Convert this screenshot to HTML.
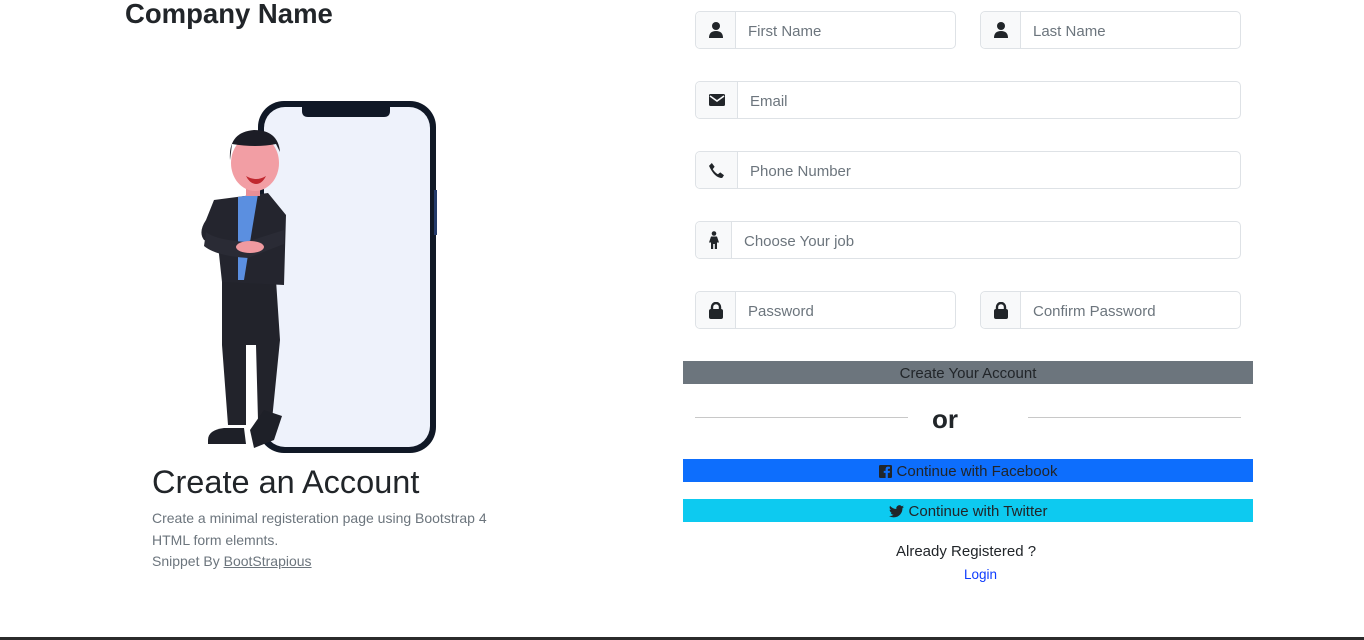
<!DOCTYPE html>
<html><head><meta charset="utf-8"><style>
*{box-sizing:border-box;margin:0;padding:0}
body{width:1364px;height:640px;background:#fff;font-family:"Liberation Sans",sans-serif;color:#212529;position:relative;overflow:hidden}
.abs{position:absolute}
.ig{position:absolute;height:38px;border:1px solid #dee2e6;border-radius:5px;display:flex;background:#fff}
.ig .ad{background:#f8f9fa;border-right:1px solid #dee2e6;display:flex;align-items:center;justify-content:center;border-radius:5px 0 0 5px}
.ig .ph{padding-left:12px;padding-top:2px;display:flex;align-items:center;font-size:15px;color:#6c757d}
.btn{position:absolute;left:683px;width:570px;height:23px;padding-top:2px;display:flex;align-items:center;justify-content:center;font-size:15px;color:#212529;gap:5px}
</style></head><body>
<div class="abs" style="left:125px;top:-2px;font-size:27.5px;font-weight:bold;color:#212529">Company Name</div>

<svg class="abs" style="left:190px;top:95px" width="260" height="365" viewBox="190 95 260 365">
<rect x="258" y="101" width="178" height="352" rx="26" fill="#101826"/>
<rect x="264" y="107" width="166" height="340" rx="21" fill="#eef2fb"/>
<path d="M302 107 h88 v4 q0 6 -6 6 h-76 q-6 0 -6 -6z" fill="#101826"/>
<rect x="434" y="190" width="3" height="45" fill="#233a6a"/>
<path d="M222 280 L276 280 L280 340 L272 420 L258 420 L256 345 L246 345 L246 425 L228 425 L222 345z" fill="#22232b"/>
<path d="M208 440 q0 -10 16 -12 l20 0 l2 16 l-38 0z" fill="#1e2028"/>
<path d="M250 430 l14 -20 l18 6 l-8 24 l-20 8z" fill="#1e2028"/>
<path d="M214 200 L268 193 L286 215 L284 285 L222 282 L218 245 L204 240 q-6 -8 2 -20z" fill="#24252e"/>
<path d="M238 197 L258 194 L252 230 L244 280 L238 280z" fill="#5b8fe0"/>
<path d="M206 232 q10 8 40 10 l38 -12 l0 14 l-36 14 q-32 -2 -44 -12z" fill="#2a2b35"/>
<ellipse cx="250" cy="247" rx="14" ry="6" fill="#f09aa0"/>
<rect x="246" y="180" width="14" height="16" fill="#e88f96"/>
<ellipse cx="255" cy="163" rx="24" ry="28" fill="#f29ea4"/>
<path d="M230 160 q-2 -28 24 -30 q24 0 26 22 l-4 -8 q-20 4 -44 0z" fill="#1c1d26"/>
<path d="M246 176 q10 6 20 0 q-4 8 -10 8 q-6 0 -10 -8z" fill="#c0282f"/>
</svg>

<div class="abs" style="left:152px;top:464px;font-size:32.5px;font-weight:500;color:#212529">Create an Account</div>
<div class="abs" style="left:152px;top:508px;font-size:14px;line-height:21.5px;color:#6c757d">Create a minimal registeration page using Bootstrap 4<br>HTML form elemnts.<br>Snippet By <span style="text-decoration:underline">BootStrapious</span></div>

<div class="ig" style="left:695px;top:11px;width:261px"><div class="ad" style="width:40px"><svg width="14" height="16" viewBox="0 0 14 16"><circle cx="7" cy="4" r="4" fill="#212529"/><path d="M0 16 q0 -7 7 -7 q7 0 7 7z" fill="#212529"/></svg></div><div class="ph">First Name</div></div>
<div class="ig" style="left:980px;top:11px;width:261px"><div class="ad" style="width:40px"><svg width="14" height="16" viewBox="0 0 14 16"><circle cx="7" cy="4" r="4" fill="#212529"/><path d="M0 16 q0 -7 7 -7 q7 0 7 7z" fill="#212529"/></svg></div><div class="ph">Last Name</div></div>
<div class="ig" style="left:695px;top:81px;width:546px"><div class="ad" style="width:42px"><svg width="16" height="12" viewBox="0 0 16 12"><rect width="16" height="12" rx="1.5" fill="#212529"/><path d="M1 2 L8 7 L15 2" stroke="#f8f9fa" stroke-width="1.6" fill="none"/></svg></div><div class="ph">Email</div></div>
<div class="ig" style="left:695px;top:151px;width:546px"><div class="ad" style="width:42px"><svg width="15" height="15" viewBox="0 0 16 16"><path d="M3 0 L6 4 L4 6.5 Q6 10 9.5 12 L12 10 L16 13 L14 16 Q6 16 0 3z" fill="#212529"/></svg></div><div class="ph">Phone Number</div></div>
<div class="ig" style="left:695px;top:221px;width:546px"><div class="ad" style="width:36px"><svg width="10" height="18" viewBox="0 0 10 18"><circle cx="5" cy="2.5" r="2.3" fill="#212529"/><path d="M2 5.5 h6 l2 6 h-2 l0 6.5 h-2.2 v-5 h-1.6 v5 h-2.2 v-6.5 h-2z" fill="#212529"/></svg></div><div class="ph">Choose Your job</div></div>
<div class="ig" style="left:695px;top:291px;width:261px"><div class="ad" style="width:40px"><svg width="14" height="17" viewBox="0 0 14 17"><path d="M3 7 V5 a4 4 0 0 1 8 0 V7" stroke="#212529" stroke-width="2.4" fill="none"/><rect y="7" width="14" height="10" rx="2" fill="#212529"/></svg></div><div class="ph">Password</div></div>
<div class="ig" style="left:980px;top:291px;width:261px"><div class="ad" style="width:40px"><svg width="14" height="17" viewBox="0 0 14 17"><path d="M3 7 V5 a4 4 0 0 1 8 0 V7" stroke="#212529" stroke-width="2.4" fill="none"/><rect y="7" width="14" height="10" rx="2" fill="#212529"/></svg></div><div class="ph">Confirm Password</div></div>

<div class="btn" style="top:361px;background:#6c757d">Create Your Account</div>
<div class="abs" style="left:695px;top:417px;width:213px;height:1px;background:#c8c8c8"></div>
<div class="abs" style="left:1028px;top:417px;width:213px;height:1px;background:#c8c8c8"></div>
<div class="abs" style="left:932px;top:404px;font-size:26px;font-weight:bold">or</div>
<div class="btn" style="top:459px;background:#0d6efd"><svg width="13" height="13" viewBox="0 0 14 14"><rect width="14" height="14" rx="1.5" fill="#212529"/><path d="M9.5 14 V8.5 h2 l0.3 -2.2 h-2.3 V5 q0 -1 1 -1 h1.3 V2 q-1 -0.2 -2 -0.2 q-2.7 0 -2.7 2.8 v1.7 h-2 v2.2 h2 V14z" fill="#0d6efd"/></svg>Continue with Facebook</div>
<div class="btn" style="top:499px;background:#0dcaf0"><svg width="15" height="13" viewBox="0 0 24 20"><path d="M24 2.4a10 10 0 0 1-2.8.8A5 5 0 0 0 23.3.4a10 10 0 0 1-3.1 1.2A4.9 4.9 0 0 0 11.8 6 14 14 0 0 1 1.7.9a4.9 4.9 0 0 0 1.5 6.6A4.9 4.9 0 0 1 1 6.9a4.9 4.9 0 0 0 3.9 4.8 4.9 4.9 0 0 1-2.2.1 4.9 4.9 0 0 0 4.6 3.4A9.9 9.9 0 0 1 0 17.2 14 14 0 0 0 7.5 19.4c9.1 0 14-7.5 14-14v-.6A10 10 0 0 0 24 2.4z" fill="#212529"/></svg>Continue with Twitter</div>
<div class="abs" style="left:896px;top:543px;font-size:15px">Already Registered ?</div>
<div class="abs" style="left:964px;top:567px;font-size:13.5px;color:#0d3bfd">Login</div>
<div class="abs" style="left:0;top:637px;width:1364px;height:3px;background:#2b2b2b"></div>
</body></html>
